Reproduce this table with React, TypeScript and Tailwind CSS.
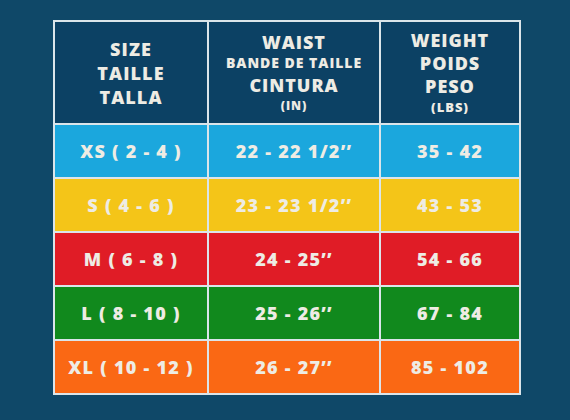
import React from "react";

const rows = [
  { size: "XS ( 2 - 4 )", waist: "22 - 22 1/2’’", weight: "35 - 42", bg: "bg-[#1ba7dd]" },
  { size: "S ( 4 - 6 )", waist: "23 - 23 1/2’’", weight: "43 - 53", bg: "bg-[#f4c518]" },
  { size: "M ( 6 - 8 )", waist: "24 - 25’’", weight: "54 - 66", bg: "bg-[#e01c26]" },
  { size: "L ( 8 - 10 )", waist: "25 - 26’’", weight: "67 - 84", bg: "bg-[#11891d]" },
  { size: "XL ( 10 - 12 )", waist: "26 - 27’’", weight: "85 - 102", bg: "bg-[#fa6814]" },
];

export default function App() {
  return (
    <div className="w-[570px] h-[420px] bg-[#0f4868] pt-[20px] pl-[53px] font-['Open_Sans',sans-serif] text-[#eeece4]">
      <div className="grid w-[468px] grid-cols-[152px_170px_138px] grid-rows-[101px_repeat(5,52px)] gap-[2px] p-[2px] bg-[#dbe5ea]">
        {/* Header */}
        <div className="bg-[#0c4164] flex flex-col items-center justify-center font-extrabold text-[18px] leading-[24px] tracking-[0.06em]">
          <span>SIZE</span>
          <span>TAILLE</span>
          <span>TALLA</span>
        </div>
        <div className="bg-[#0c4164] flex flex-col items-center justify-center font-extrabold tracking-[0.06em]">
          <span className="text-[18px] leading-[21px]">WAIST</span>
          <span className="text-[14px] leading-[20px]">BANDE DE TAILLE</span>
          <span className="text-[18px] leading-[24px]">CINTURA</span>
          <span className="text-[12px] leading-[17px]">(IN)</span>
        </div>
        <div className="bg-[#0c4164] flex flex-col items-center justify-center font-extrabold tracking-[0.06em]">
          <span className="text-[18px] leading-[23px]">WEIGHT</span>
          <span className="text-[18px] leading-[23px]">POIDS</span>
          <span className="text-[18px] leading-[23px]">PESO</span>
          <span className="text-[13px] leading-[19px]">(LBS)</span>
        </div>

        {rows.map((r) => (
          <React.Fragment key={r.size}>
            <div className={`${r.bg} flex items-center justify-center font-extrabold text-[18px] tracking-[0.07em]`}>{r.size}</div>
            <div className={`${r.bg} flex items-center justify-center font-extrabold text-[18px] tracking-[0.07em]`}>{r.waist}</div>
            <div className={`${r.bg} flex items-center justify-center font-extrabold text-[18px] tracking-[0.07em]`}>{r.weight}</div>
          </React.Fragment>
        ))}
      </div>
    </div>
  );
}
